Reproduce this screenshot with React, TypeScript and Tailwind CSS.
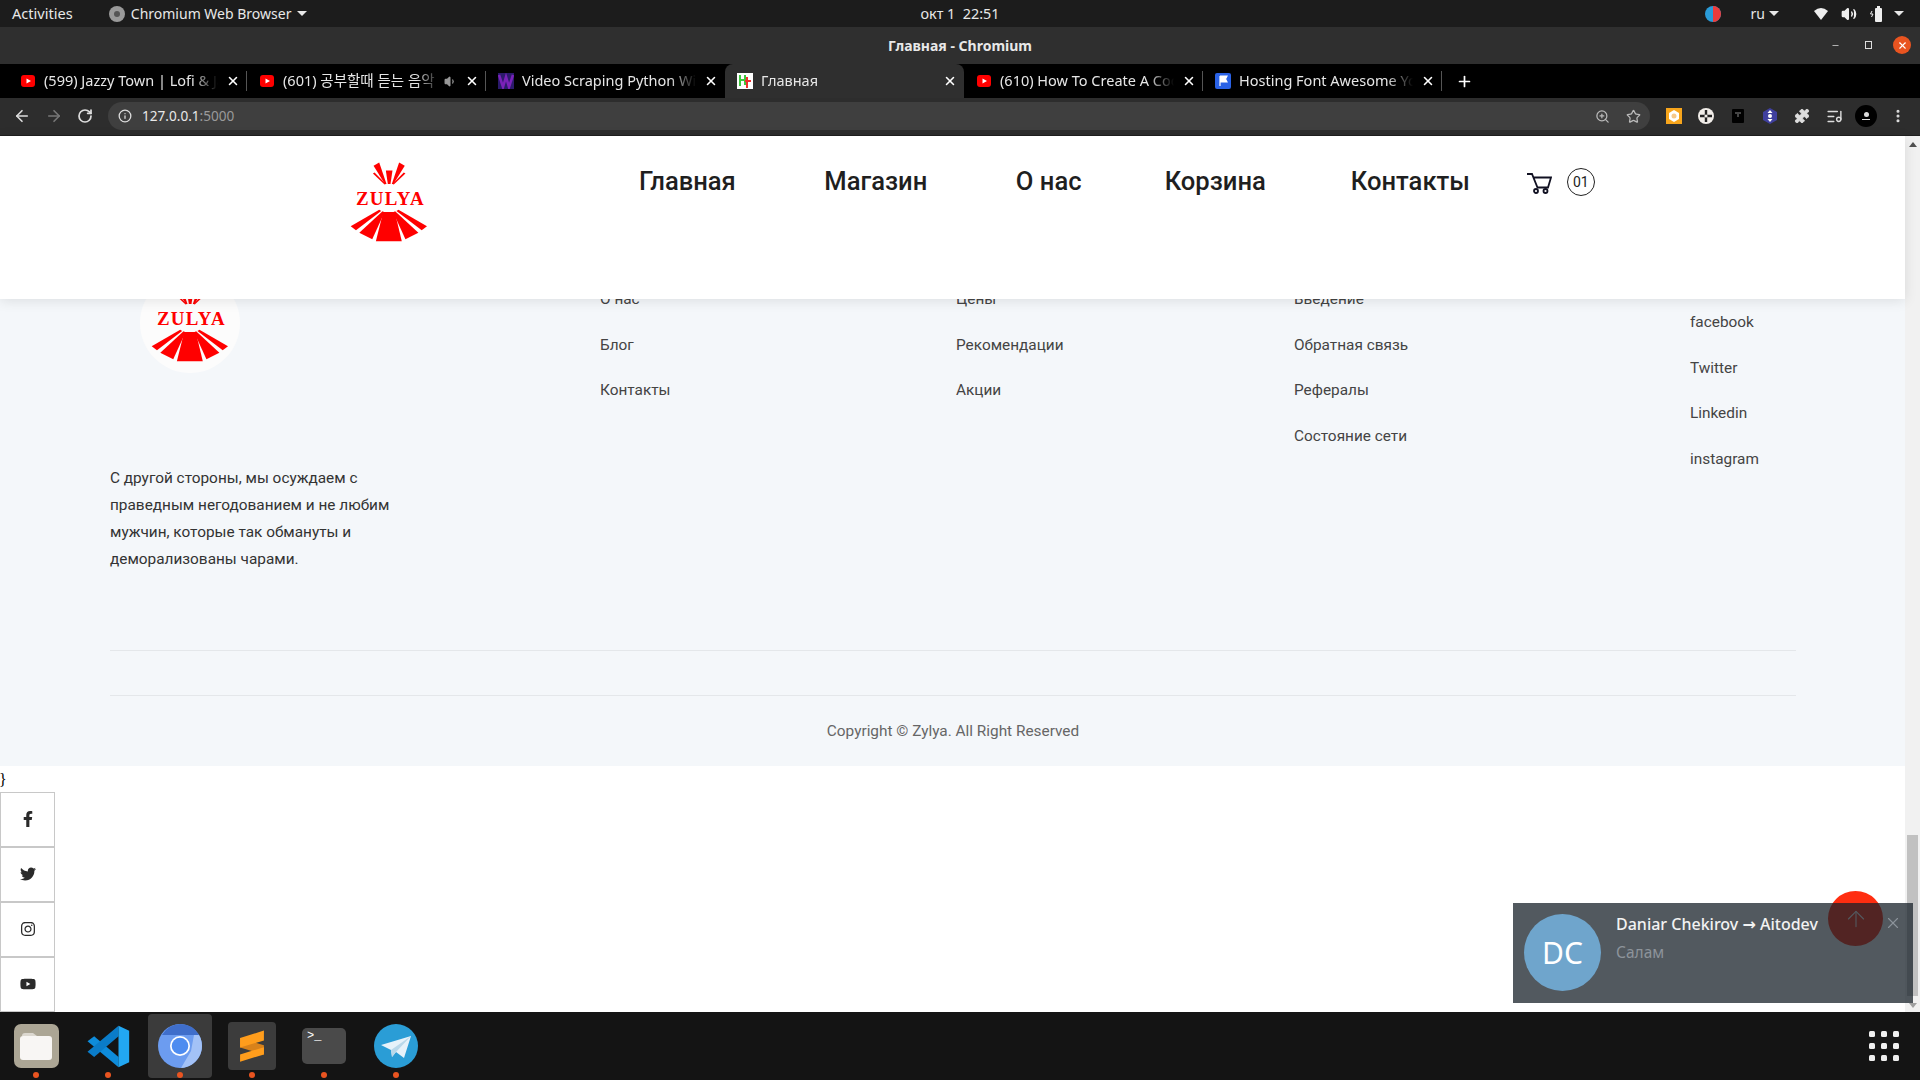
import React from "react";
import { ArrowLeft, ArrowRight, RotateCw, Info, ZoomIn, Star, Puzzle, ListMusic, MoreVertical, X, Plus, ArrowUp, Volume1, Volume2, Minus } from "lucide-react";
import { FaFacebookF, FaTwitter, FaInstagram, FaYoutube } from "react-icons/fa";

function Logo() {
  return (
    <svg viewBox="750 65 235 240" className="w-[78px] h-[80px] block">
      <g fill="#ff0000">
        <polygon points="858,90 878,90 872,131 864,131" />
        <polygon points="821,76 838,66 860,131 855,131" />
        <polygon points="915,76 898,66 876,131 881,131" />
        <polygon points="819,99 824,96 858,131 854,132" />
        <polygon points="917,99 912,96 878,131 882,132" />
        <polygon points="850,215 885,215 906,303 828,303" />
        <polygon points="838,208 844,212 768,270 752,258" />
        <polygon points="896,208 890,212 966,270 982,258" />
        <polygon points="848,213 854,216 817,297 778,278" />
        <polygon points="886,213 880,216 917,297 956,278" />
        <text x="870" y="193" textAnchor="middle" fontFamily="'Liberation Serif', serif" fontWeight="700" fontSize="57" textLength="204">ZULYA</text>
      </g>
    </svg>
  );
}

function Yt() {
  return (
    <svg viewBox="0 0 16 16" className="w-4 h-4 shrink-0">
      <rect x="1" y="2" width="14" height="12" rx="3" fill="#f00" />
      <polygon points="6.5,5.5 11,8 6.5,10.5" fill="#fff" />
    </svg>
  );
}
function VideoFav() {
  return (
    <svg viewBox="0 0 16 16" className="w-4 h-4 shrink-0">
      <rect width="16" height="16" fill="#2b1a6b" />
      <path d="M1 2 L5 14 L8 4 L11 14 L15 2" stroke="#7a22b8" strokeWidth="2.6" fill="none" />
    </svg>
  );
}
function HtFav() {
  return (
    <svg viewBox="0 0 16 16" className="w-4 h-4 shrink-0">
      <rect width="16" height="16" fill="#fff" />
      <path d="M3 2 V13 M3 7 H8 M8 2 V12" stroke="#3fc83f" strokeWidth="2" fill="none" />
      <path d="M10 4 V15 M8 8 H14" stroke="#f03030" strokeWidth="2" fill="none" />
    </svg>
  );
}
function FlagFav() {
  return (
    <svg viewBox="0 0 16 16" className="w-4 h-4 shrink-0">
      <rect width="16" height="16" rx="2" fill="#2a62e6" />
      <path d="M5 3 V13 M5 3 H12 L10.5 6 L12 9 H5" stroke="#fff" strokeWidth="1.2" fill="#fff" />
    </svg>
  );
}

function Tab({ title, icon, active, sound, divider }: { title: string; icon: React.ReactNode; active?: boolean; sound?: boolean; divider?: boolean }) {
  return (
    <div className={"w-[239px] h-full flex items-center pl-3 pr-[7px] relative " + (active ? "bg-[#2f2f2f] rounded-t-lg" : "")}>
      {icon}
      <div className="ml-2 flex-1 min-w-0 overflow-hidden whitespace-nowrap text-[14.5px] text-[#e6e6e6] [mask-image:linear-gradient(to_right,black_85%,transparent)]">
        {title}
      </div>
      {sound && <Volume1 size={13} className="text-[#999] ml-1 shrink-0" fill="#999" />}
      <X size={14} strokeWidth={2.6} className="ml-2 text-white shrink-0" />
      {divider && <div className="absolute right-0 top-[7px] bottom-[7px] w-px bg-[#555]" />}
    </div>
  );
}

function Ext({ children }: { children: React.ReactNode }) {
  return <div className="w-8 flex items-center justify-center">{children}</div>;
}

const col2 = ["Цены", "Рекомендации", "Акции"];
const col1 = ["О нас", "Блог", "Контакты"];
const col3 = ["Введение", "Обратная связь", "Рефералы", "Состояние сети"];
const col4 = ["facebook", "Twitter", "Linkedin", "instagram"];

function LinkCol({ items, w, top }: { items: string[]; w: string; top: string }) {
  return (
    <ul className={w + " " + top + " shrink-0 text-[15.36px] leading-[45.5px] text-[#444]"}>
      {items.map((t) => (
        <li key={t}>{t}</li>
      ))}
    </ul>
  );
}

function Dot() {
  return <div className="absolute bottom-[2px] left-[33px] w-[6px] h-[6px] rounded-full bg-[#e95420]" />;
}

export default function App() {
  return (
    <div className="w-[1920px] h-[1080px] overflow-hidden flex flex-col relative bg-white font-['Roboto',sans-serif]">
      {/* Ubuntu top bar */}
      <div className="h-[27px] bg-[#1c1c1c] text-[#e8e8e8] text-[14px] font-['Noto_Sans',sans-serif] flex items-center relative shrink-0">
        <span className="ml-3 text-[14.6px]">Activities</span>
        <svg viewBox="0 0 16 16" className="w-4 h-4 ml-[36px]">
          <circle cx="8" cy="8" r="8" fill="#9a9a9a" />
          <circle cx="8" cy="8" r="3" fill="#555" />
        </svg>
        <span className="ml-[6px]">Chromium Web Browser</span>
        <span className="ml-[6px] border-x-[5px] border-x-transparent border-t-[5px] border-t-[#e8e8e8]" />
        <span className="ml-[613px] text-[14.4px] whitespace-pre">окт 1  22:51</span>
        <svg viewBox="0 0 16 16" className="w-4 h-4 ml-[705px]">
          <circle cx="8" cy="8" r="8" fill="#2a9bd8" />
          <path d="M8 0 A8 8 0 0 1 8 16 Z" fill="#ee3b3b" />
        </svg>
        <span className="ml-[30px]">ru</span>
        <span className="ml-[4px] border-x-[5px] border-x-transparent border-t-[5px] border-t-[#e8e8e8]" />
        <svg viewBox="0 0 16 16" className="w-4 h-4 ml-[34px]">
          <path d="M1 5 Q8 -1 15 5 L8 14 Z" fill="#eee" />
        </svg>
        <Volume2 size={16} className="ml-[12px] text-[#eee]" fill="#eee" />
        <svg viewBox="0 0 16 18" className="w-4 h-[18px] ml-[13px]">
          <rect x="5" y="3" width="7" height="14" rx="1" fill="#eee" />
          <rect x="7" y="1" width="3" height="2" fill="#eee" />
          <path d="M2 6 L0.5 9 H3 L1.5 12" stroke="#eee" fill="none" />
        </svg>
        <span className="ml-[8px] border-x-[5px] border-x-transparent border-t-[5px] border-t-[#e8e8e8]" />
      </div>

      {/* Window title bar */}
      <div className="h-[37px] bg-[#2f2f2f] relative shrink-0 flex items-center justify-center text-[14px] font-bold text-[#e8e8e8] font-['Noto_Sans',sans-serif]">
        Главная - Chromium
        <div className="absolute right-[9px] top-[9px] flex items-center text-[#ddd]">
          <Minus size={9} />
          <div className="ml-[25px] mr-[21px] w-[7px] h-[8px] border border-[#ddd]" />
          <div className="w-[18px] h-[18px] rounded-full bg-[#e95420] flex items-center justify-center">
            <X size={11} strokeWidth={2.4} className="text-white" />
          </div>
        </div>
      </div>

      {/* Tabs */}
      <div className="h-[34px] bg-black flex items-center pl-2 shrink-0 font-['Noto_Sans','Noto_Sans_CJK_KR',sans-serif]">
        <Tab title="(599) Jazzy Town | Lofi & Jazz" icon={<Yt />} divider />
        <Tab title="(601) 공부할때 듣는 음악" icon={<Yt />} sound divider />
        <Tab title="Video Scraping Python With" icon={<VideoFav />} />
        <Tab title="Главная" icon={<HtFav />} active />
        <Tab title="(610) How To Create A Cool" icon={<Yt />} divider />
        <Tab title="Hosting Font Awesome Yourself" icon={<FlagFav />} divider />
        <Plus size={17} strokeWidth={2.4} className="ml-[14px] text-white" />
      </div>

      {/* Toolbar */}
      <div className="h-[38px] bg-[#2d2d2d] flex items-center shrink-0 border-b border-[#1f1f1f] pb-px">
        <div className="w-[108px] flex items-center text-[#ddd] pl-[13px] gap-[14px]">
          <ArrowLeft size={18} strokeWidth={2.2} />
          <ArrowRight size={18} strokeWidth={2.2} className="text-[#777]" />
          <RotateCw size={16} strokeWidth={2.6} />
        </div>
        <div className="w-[1542px] h-[28px] rounded-full bg-[#3f3f3f] flex items-center pl-[10px] text-[13.6px] font-['Noto_Sans',sans-serif]">
          <Info size={14} className="text-[#ddd]" strokeWidth={2.2} />
          <span className="ml-[10px] text-[#e8e8e8]">
            127.0.0.1<span className="text-[#9a9a9a]">:5000</span>
          </span>
          <div className="ml-auto flex items-center gap-[16px] pr-[9px] text-[#bbb]">
            <ZoomIn size={15} />
            <Star size={15} />
          </div>
        </div>
        <div className="flex ml-[8px] text-[#ddd]">
          <Ext>
            <svg viewBox="0 0 16 16" className="w-4 h-4">
              <rect width="16" height="16" fill="#f7a51c" />
              <polygon points="8,2 13,5 13,11 8,14 3,11 3,5" fill="#fff" />
              <circle cx="8" cy="8" r="2.5" fill="#f7c98a" />
            </svg>
          </Ext>
          <Ext>
            <svg viewBox="0 0 16 16" className="w-4 h-4">
              <circle cx="8" cy="8" r="8" fill="#f0ece8" />
              <path d="M8 2 V14 M2 8 H14" stroke="#222" strokeWidth="2.4" />
              <circle cx="8" cy="8" r="1.6" fill="#f0ece8" />
            </svg>
          </Ext>
          <Ext>
            <svg viewBox="0 0 12 14" className="w-3 h-[14px]">
              <rect width="12" height="14" rx="1" fill="#000" />
              <path d="M3 3 H9 V5 H7 V8 H5 V5 H3 Z" fill="#444" />
            </svg>
          </Ext>
          <Ext>
            <svg viewBox="0 0 16 16" className="w-4 h-4">
              <polygon points="8,0 15,4 15,12 8,16 1,12 1,4" fill="#3f3f9e" />
              <path d="M8 2 L10.5 5 H5.5 Z M8 14 L10.5 11 H5.5 Z" fill="#fff" />
              <circle cx="8" cy="8" r="2" fill="#fff" />
            </svg>
          </Ext>
          <Ext>
            <Puzzle size={16} fill="#ddd" strokeWidth={1.2} />
          </Ext>
          <Ext>
            <ListMusic size={17} strokeWidth={2} />
          </Ext>
          <Ext>
            <div className="w-[22px] h-[22px] rounded-full bg-black flex flex-col items-center justify-center">
              <div className="w-[5px] h-[5px] rounded-full bg-[#ddd]" />
              <div className="w-[8px] h-px bg-[#ddd] mt-[2px]" />
            </div>
          </Ext>
          <Ext>
            <MoreVertical size={16} strokeWidth={2.6} />
          </Ext>
        </div>
      </div>

      {/* Page */}
      <div className="flex-1 min-h-0 relative flex flex-col">
        <nav className="h-[163px] bg-white relative z-10 shadow-[0_2px_12px_rgba(0,0,0,0.1)] flex items-start pl-[350px] pt-[26px] mr-[15px] shrink-0 text-black">
          <Logo />
          <div className="ml-[211px] mt-[-4px] flex items-center text-[25.6px] font-medium leading-[46px] text-[#1f1f1f]">
            <span>Главная</span>
            <span className="ml-[88.5px]">Магазин</span>
            <span className="ml-[88.5px]">О нас</span>
            <span className="ml-[83px]">Корзина</span>
            <span className="ml-[85px]">Контакты</span>
          </div>
          <svg viewBox="0 0 25 21" className="w-[25px] h-[21px] ml-[57px] mt-[11px]" fill="none" stroke="#111122" strokeWidth="1.8">
            <path d="M0 1 H5 L10.5 14.5 H21 L24 4.5 H7" />
            <circle cx="9" cy="18" r="2" />
            <circle cx="18.5" cy="18" r="2" />
          </svg>
          <div className="ml-[15px] mt-[6px] w-7 h-7 rounded-full border border-[#222] flex items-center justify-center text-[14px] text-[#222]">01</div>
        </nav>

        <footer className="-mt-[49px] h-[516px] bg-[#f4f7fa] mr-[15px] shrink-0 px-[110px] pt-[23px] flex flex-col">
          <div className="flex h-[377px]">
            <div className="w-[490px] shrink-0">
              <div className="w-[100px] h-[100px] rounded-full bg-[#fcfcfc] ml-[30px] flex items-center justify-center pb-[2px]">
                <Logo />
              </div>
              <p className="mt-[92px] w-[300px] text-[15.36px] leading-[27px] text-[#333]">
                С другой стороны, мы осуждаем с праведным негодованием и не любим мужчин, которые так обмануты и деморализованы чарами.
              </p>
            </div>
            <LinkCol items={col1} w="w-[356px]" top="pt-[4px]" />
            <LinkCol items={col2} w="w-[338px]" top="pt-[4px]" />
            <LinkCol items={col3} w="w-[396px]" top="pt-[4px]" />
            <LinkCol items={col4} w="w-[120px]" top="pt-[27px]" />
          </div>
          <div className="h-[46px] border-t border-b border-[#e4e7ea] w-[1686px]" />
          <div className="w-[1686px] text-center text-[15.36px] text-[#666] mt-[25px] leading-[20px]">
            Copyright © Zylya. All Right Reserved
          </div>
        </footer>

        <div className="h-[26px] text-[16px] leading-[28px] -ml-px font-['Liberation_Serif',serif] text-black shrink-0">{"}"}</div>

        <div className="w-[55px] text-[#2a2a2a] text-[16px]">
          {[<FaFacebookF key="f" />, <FaTwitter key="t" />, <FaInstagram key="i" />, <FaYoutube key="y" />].map((ic, i) => (
            <div key={i} className="h-[55px] border border-[#c8c8c8] flex items-center justify-center pb-[2px]">
              {ic}
            </div>
          ))}
        </div>

        {/* Scrollbar */}
        <div className="absolute right-0 top-0 bottom-0 w-[15px] bg-[#f1f1f1] flex flex-col items-center">
          <div className="mt-[6px] border-x-[4px] border-x-transparent border-b-[5px] border-b-[#505050]" />
          <div className="absolute top-[699px] h-[161px] left-[2px] w-[11px] bg-[#c1c1c1]" />
          <div className="absolute bottom-[4px] border-x-[4px] border-x-transparent border-t-[5px] border-t-[#a0a0a0]" />
        </div>

        {/* Back to top */}
        <div className="absolute left-[1828px] top-[755px] w-[55px] h-[55px] rounded-full bg-[#ff2d10] flex items-center justify-center">
          <ArrowUp size={26} strokeWidth={1} className="text-white" />
        </div>

        {/* Notification */}
        <div className="absolute left-[1513px] top-[767px] w-[400px] h-[100px] bg-[#182129]/75 flex z-20 font-['Noto_Sans',sans-serif]">
          <div className="ml-[11px] mt-[11px] w-[77px] h-[77px] rounded-full bg-[#6fa5cc] flex items-center justify-center text-white text-[30px]">DC</div>
          <div className="ml-[15px] mt-[8px]">
            <div className="text-[16px] leading-[26px] font-medium text-[#f2f2f2] whitespace-nowrap">
              Daniar Chekirov <span className="font-['DejaVu_Sans',sans-serif] font-bold text-[16px]">→</span> Aitodev
            </div>
            <div className="mt-[1px] text-[15.5px] leading-[26px] text-[#8d949b]">Салам</div>
          </div>
          <X size={18} strokeWidth={1.5} className="absolute right-[11px] top-[11px] text-[#8d949b]" />
        </div>
      </div>

      {/* Dock */}
      <div className="h-[68px] bg-[#141414] flex items-center shrink-0 relative">
        <div className="w-[72px] h-[68px] relative flex items-center justify-center">
          <div className="w-[45px] h-[44px] rounded-[7px] bg-[#aca695] flex items-center justify-center">
            <svg viewBox="0 0 32 28" className="w-8 h-7">
              <path d="M2 4 Q2 1 5 1 H13 L17 4 Z" fill="#dcd8d0" />
              <rect x="0" y="4" width="32" height="24" rx="3" fill="#f8f6f4" />
            </svg>
          </div>
          <Dot />
        </div>
        <div className="w-[72px] h-[68px] relative flex items-center justify-center">
          <svg viewBox="45 25 140 135" className="w-[47px] h-[45px]">
            <polygon points="145,155 145,124 72,62 52,77" fill="#0e8cdb" />
            <polygon points="145,30 145,62 72,124 52,108" fill="#0a7cc9" />
            <polygon points="145,30 177,45 177,140 145,155" fill="#22a7f2" />
          </svg>
          <Dot />
        </div>
        <div className="w-[72px] h-[68px] relative flex items-center justify-center">
          <div className="w-[64px] h-[64px] rounded-[4px] bg-[#3b3b3b] flex items-center justify-center">
            <svg viewBox="0 0 44 44" className="w-[44px] h-[44px]">
              <circle cx="22" cy="22" r="22" fill="#6c9cf0" />
              <path d="M22 0 A22 22 0 0 1 41 11 L22 11 L4 11 A22 22 0 0 1 22 0 Z" fill="#3f6ecb" />
              <path d="M41 11 A22 22 0 0 1 23 44 L33 27 L36 11 Z" fill="#a3c2f7" />
              <circle cx="22" cy="22" r="10" fill="#fff" />
              <circle cx="22" cy="22" r="8.3" fill="#4e8cf0" />
            </svg>
          </div>
          <Dot />
        </div>
        <div className="w-[72px] h-[68px] relative flex items-center justify-center">
          <div className="w-[48px] h-[48px] rounded-[4px] bg-[#3c3c3c]">
            <svg viewBox="474 20 144 145" className="w-12 h-12">
              <polygon points="510,68 582,90 582,118 510,97" fill="#d9821a" />
              <polygon points="510,68 582,46 582,76 510,97" fill="#ff9d1c" />
              <polygon points="510,118 582,96 582,118 510,140" fill="#ff9d1c" />
            </svg>
          </div>
          <Dot />
        </div>
        <div className="w-[72px] h-[68px] relative flex items-center justify-center">
          <div className="w-[44px] h-[36px] rounded-[5px] bg-[#4a4a4a] pl-[5px] font-['Liberation_Mono',monospace] text-[12px] leading-[16px] text-white">{">_"}</div>
          <Dot />
        </div>
        <div className="w-[72px] h-[68px] relative flex items-center justify-center">
          <svg viewBox="0 0 44 44" className="w-[44px] h-[44px]">
            <circle cx="22" cy="22" r="22" fill="#2a9dd6" />
            <polygon points="7,21 37,12 30,34 22,28 18,33 17,26" fill="#e6f2fa" />
            <polygon points="17,26 37,12 22,28 18,33" fill="#b9d8ea" />
          </svg>
          <Dot />
        </div>
        <div className="absolute left-[1869px] top-[19px] grid grid-cols-3 gap-[6px]">
          {Array.from({ length: 9 }).map((_, i) => (
            <div key={i} className="w-[6px] h-[6px] rounded-[1.5px] bg-[#eee]" />
          ))}
        </div>
      </div>
    </div>
  );
}
